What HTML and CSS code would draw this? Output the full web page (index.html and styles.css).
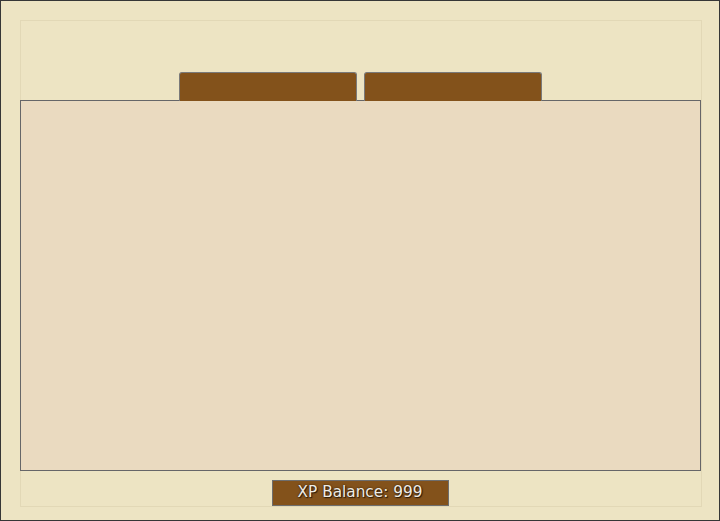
FILE: index.html
```html
<!DOCTYPE html>
<html>
<head>
<meta charset="utf-8">
<link rel="stylesheet" href="styles.css">
</head>
<body>
<div class="frame">
  <div class="inner">
    <div class="tabs">
      <div class="tab"></div>
      <div class="tab"></div>
    </div>
    <div class="panel"></div>
    <div class="xp">XP Balance: 999</div>
  </div>
</div>
</body>
</html>
```
FILE: styles.css
```css
html, body {
  margin: 0;
  padding: 0;
}
.frame {
  width: 720px;
  height: 521px;
  box-sizing: border-box;
  border: 1px solid #363636;
  background: #ede4c3;
  padding: 19px 17px 13px 19px;
}
.inner {
  height: 487px;
  box-sizing: border-box;
  border: 1px solid #e2d8b6;
  padding-top: 51px;
  display: flex;
  flex-direction: column;
  align-items: center;
}
.tabs {
  display: flex;
  gap: 7px;
  height: 28px;
  margin-left: -2px;
}
.tab {
  width: 178px;
  height: 29px;
  box-sizing: border-box;
  background: #83521b;
  border: 1px solid #7a7a7a;
  border-bottom: none;
  border-radius: 3px 3px 0 0;
  position: relative;
  z-index: 1;
}
.panel {
  align-self: stretch;
  margin: 0 0 0 -1px;
  height: 371px;
  box-sizing: border-box;
  background: #eadac0;
  border: 1px solid #666668;
}
.xp {
  margin-top: 9px;
  margin-left: -2px;
  width: 177px;
  height: 26px;
  box-sizing: border-box;
  background: #83521b;
  border: 1px solid #6e6e6e;
  color: #f0ece4;
  font-family: "DejaVu Sans", sans-serif;
  font-size: 15.3px;
  line-height: 23px;
  text-align: center;
  text-shadow: 0 0 2px #2a1a08, 1px 1px 1px #2a1a08;
}
```
